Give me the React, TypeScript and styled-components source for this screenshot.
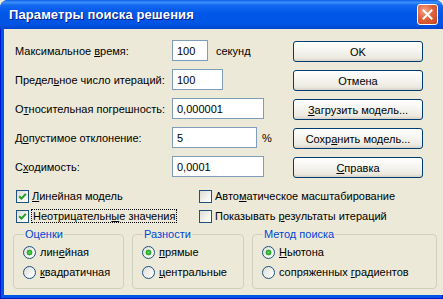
import React from "react";
import styled, { createGlobalStyle } from "styled-components";

const GlobalStyle = createGlobalStyle`
  html, body {
    margin: 0;
    padding: 0;
    background: #ece9d8;
  }
  body {
    font-family: "Liberation Sans", "DejaVu Sans", sans-serif;
    font-size: 11px;
    color: #000;
  }
`;

const Window = styled.div`
  width: 443px;
  height: 299px;
  display: flex;
  flex-direction: column;
  border-radius: 8px 8px 0 0;
  overflow: hidden;
  background: #0054e3;
`;

const TitleBar = styled.div`
  height: 29px;
  flex-shrink: 0;
  display: flex;
  align-items: center;
  justify-content: space-between;
  padding: 0 5px 0 9px;
  box-sizing: border-box;
  background: linear-gradient(
    180deg,
    #0a5ee8 0%,
    #3d8ff9 8%,
    #1469f0 18%,
    #0057e8 45%,
    #0054e3 85%,
    #0145cc 100%
  );
`;

const Title = styled.span`
  color: #fff;
  font-weight: bold;
  font-size: 13px;
  letter-spacing: 0.1px;
  text-shadow: 1px 1px 0 #0a1e8a;
`;

const CloseButton = styled.div`
  width: 21px;
  height: 21px;
  box-sizing: border-box;
  border: 1px solid #fff;
  border-radius: 3px;
  background: radial-gradient(circle at 35% 30%, #f3a58a 0%, #e0633c 45%, #c5421d 100%);
  display: flex;
  align-items: center;
  justify-content: center;
`;

const Frame = styled.div`
  flex: 1;
  display: flex;
  padding: 0 4px 4px;
  background: #0055e5;
  box-shadow: inset 1px 0 #0019cf, inset -1px 0 #0019cf, inset 0 -1px #0019cf;
`;

const Client = styled.div`
  flex: 1;
  background: #ece9d8;
  padding: 11px 6px 0 9px;
  display: flex;
  flex-direction: column;
`;

const Form = styled.div`
  display: grid;
  grid-template-columns: 157px 121px 130px;
  grid-auto-rows: 21px;
  row-gap: 8px;
  align-items: center;
  padding-left: 2px;
`;

const Label = styled.span`
  white-space: nowrap;
`;

const FieldCell = styled.div`
  display: flex;
  align-items: center;
  gap: ${(p: { $gap?: number }) => p.$gap ?? 8}px;
  height: 21px;
`;

const Input = styled.div<{ $w: number }>`
  width: ${(p) => p.$w}px;
  height: 21px;
  box-sizing: border-box;
  border: 1px solid #7f9db9;
  background: #fff;
  padding-left: 4px;
  display: flex;
  align-items: center;
`;

const Button = styled.div`
  width: 130px;
  height: 21px;
  box-sizing: border-box;
  border: 1px solid #003c74;
  border-radius: 3px;
  background: linear-gradient(180deg, #ffffff 0%, #f4f3ee 50%, #ece9e0 85%, #d6d0c5 100%);
  display: flex;
  align-items: center;
  justify-content: center;
  margin-top: 2px;
`;

const U = styled.span`
  text-decoration: underline;
`;

const Checks = styled.div`
  display: grid;
  grid-template-columns: 183px auto;
  grid-auto-rows: 20px;
  align-items: center;
  margin-top: 9px;
  padding-left: 3px;
`;

const CheckItem = styled.div`
  display: flex;
  align-items: center;
  gap: 3px;
  white-space: nowrap;
`;

const CheckBox = styled.span`
  width: 13px;
  height: 13px;
  box-sizing: border-box;
  border: 1px solid #1c5180;
  background: linear-gradient(135deg, #dcdcd7 0%, #f3f3ef 60%, #ffffff 100%);
  display: inline-flex;
  align-items: center;
  justify-content: center;
  flex-shrink: 0;
`;

const Focus = styled.span`
  outline: 1px dotted #000;
  outline-offset: 0;
  padding: 0 1px;
`;

const Groups = styled.div`
  display: flex;
  gap: 8px;
  margin-top: 2px;
`;

const Group = styled.fieldset<{ $w: number }>`
  width: ${(p) => p.$w}px;
  height: 61px;
  box-sizing: border-box;
  margin: 0;
  padding: 5px 0 0 9px;
  border: 1px solid #d0d0bf;
  border-radius: 4px;
  display: flex;
  flex-direction: column;
  gap: 6px;
`;

const Legend = styled.legend`
  color: #0046d5;
  padding: 0 1px;
  margin-left: 1px;
`;

const RadioItem = styled.div`
  display: flex;
  align-items: center;
  gap: 4px;
  white-space: nowrap;
  height: 14px;
`;

const Radio = styled.span<{ $on?: boolean }>`
  width: 13px;
  height: 13px;
  box-sizing: border-box;
  border-radius: 50%;
  border: 1px solid #1c5180;
  flex-shrink: 0;
  background: ${(p) =>
      p.$on
        ? "radial-gradient(circle at 50% 50%, #63d863 0, #2fae2f 2px, #21a121 2.6px, transparent 3.2px), "
        : ""}
    linear-gradient(135deg, #dcdcd7 0%, #f3f3ef 60%, #ffffff 100%);
`;

const Check = () => (
  <svg width="9" height="9" viewBox="0 0 9 9">
    <path d="M1.2 4.2 L3.5 6.6 L7.8 1.8" fill="none" stroke="#21a121" strokeWidth="2" />
  </svg>
);

const fields: { label: React.ReactNode; value: string; w: number; suffix?: string; gap?: number; button: React.ReactNode }[] = [
  { label: <>Максимальное <U>в</U>ремя:</>, value: "100", w: 36, suffix: "секунд", gap: 8, button: "OK" },
  { label: <>Предел<U>ь</U>ное число итераций:</>, value: "100", w: 51, button: "Отмена" },
  { label: <>О<U>т</U>носительная погрешность:</>, value: "0,000001", w: 92, button: <><U>З</U>агрузить модель...</> },
  { label: <>Д<U>о</U>пустимое отклонение:</>, value: "5", w: 85, suffix: "%", gap: 5, button: <>Сохр<U>а</U>нить модель...</> },
  { label: <>С<U>х</U>одимость:</>, value: "0,0001", w: 92, button: <><U>С</U>правка</> },
];

export default function App() {
  return (
    <>
      <GlobalStyle />
      <Window>
        <TitleBar>
          <Title>Параметры поиска решения</Title>
          <CloseButton>
            <svg width="11" height="11" viewBox="0 0 11 11">
              <path d="M1.5 1.5 L9.5 9.5 M9.5 1.5 L1.5 9.5" stroke="#fff" strokeWidth="2" strokeLinecap="square" />
            </svg>
          </CloseButton>
        </TitleBar>
        <Frame>
          <Client>
            <Form>
              {fields.map((f, i) => (
                <React.Fragment key={i}>
                  <Label>{f.label}</Label>
                  <FieldCell $gap={f.gap}>
                    <Input $w={f.w}>{f.value}</Input>
                    {f.suffix && <span>{f.suffix}</span>}
                  </FieldCell>
                  <Button>{f.button}</Button>
                </React.Fragment>
              ))}
            </Form>
            <Checks>
              <CheckItem>
                <CheckBox><Check /></CheckBox>
                <span><U>Л</U>инейная модель</span>
              </CheckItem>
              <CheckItem>
                <CheckBox />
                <span>Авто<U>м</U>атическое масштабирование</span>
              </CheckItem>
              <CheckItem>
                <CheckBox><Check /></CheckBox>
                <Focus>Неотрицательн<U>ы</U>е значения</Focus>
              </CheckItem>
              <CheckItem>
                <CheckBox />
                <span>Показывать <U>р</U>езультаты итераций</span>
              </CheckItem>
            </Checks>
            <Groups>
              <Group $w={111}>
                <Legend>Оценки</Legend>
                <RadioItem><Radio $on /><span>лин<U>е</U>йная</span></RadioItem>
                <RadioItem><Radio /><span><U>к</U>вадратичная</span></RadioItem>
              </Group>
              <Group $w={112}>
                <Legend>Разности</Legend>
                <RadioItem><Radio $on /><span><U>п</U>рямые</span></RadioItem>
                <RadioItem><Radio /><span><U>ц</U>ентральные</span></RadioItem>
              </Group>
              <Group $w={185}>
                <Legend>Метод поиска</Legend>
                <RadioItem><Radio $on /><span><U>Н</U>ьютона</span></RadioItem>
                <RadioItem><Radio /><span>сопряженных <U>г</U>радиентов</span></RadioItem>
              </Group>
            </Groups>
          </Client>
        </Frame>
      </Window>
    </>
  );
}
